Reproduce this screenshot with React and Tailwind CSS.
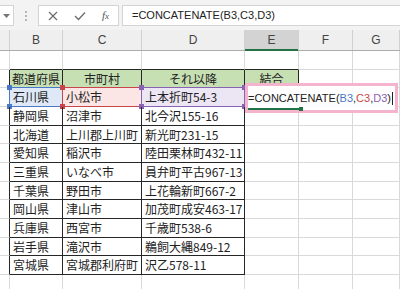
import React from "react";

const colW = ["w-[10px]", "w-[53px]", "w-[79px]", "w-[103px]", "w-[54px]", "w-[54px]", "w-[47px]"];
const rowH = ["h-[19px]", "h-[18px]", "h-[19px]", "h-[19px]", "h-[18px]", "h-[19px]", "h-[19px]", "h-[18px]", "h-[19px]", "h-[19px]", "h-[18px]", "h-[19px]", "h-[19px]"];

const data = [
  ["石川県", "小松市", "上本折町54-3"],
  ["静岡県", "沼津市", "北今沢155-16"],
  ["北海道", "上川郡上川町", "新光町231-15"],
  ["愛知県", "稲沢市", "陸田栗林町432-11"],
  ["三重県", "いなべ市", "員弁町平古967-13"],
  ["千葉県", "野田市", "上花輪新町667-2"],
  ["岡山県", "津山市", "加茂町成安463-17"],
  ["兵庫県", "西宮市", "千歳町538-6"],
  ["岩手県", "滝沢市", "鵜飼大縄849-12"],
  ["宮城県", "宮城郡利府町", "沢乙578-11"],
];

const inTable = (r, c) => (r >= 2 && r <= 12 && c >= 1 && c <= 3) || (r === 2 && c === 4);

function cellText(r, c) {
  if (r === 2) {
    return ["", "都道府県", "市町村", "それ以降", "結合"][c] || "";
  }
  if (r >= 3 && r <= 12 && c >= 1 && c <= 3) return data[r - 3][c - 1];
  return "";
}

function Sel({ border, fill }) {
  return (
    <span className={`absolute -top-px -left-px -right-px -bottom-px border ${border}`}>
      <span className={`absolute -left-[3px] -top-[3px] w-[5px] h-[5px] ${fill}`} />
      <span className={`absolute -right-[3px] -top-[3px] w-[5px] h-[5px] ${fill}`} />
      <span className={`absolute -left-[3px] -bottom-[3px] w-[5px] h-[5px] ${fill}`} />
      <span className={`absolute -right-[3px] -bottom-[3px] w-[5px] h-[5px] ${fill}`} />
    </span>
  );
}

function Cell({ r, c }) {
  const rightDark = inTable(r, c) || inTable(r, c + 1);
  const bottomDark = inTable(r, c) || inTable(r + 1, c);
  const header = r === 2;
  let bg = "";
  if (header && inTable(r, c)) bg = "bg-[#c6e0b4]";
  if (r === 3 && c === 1) bg = "bg-[#dfe8f6]";
  if (r === 3 && c === 2) bg = "bg-[#fbe5e5]";
  if (r === 3 && c === 3) bg = "bg-[#ece6f4]";
  const text = cellText(r, c);
  return (
    <div
      className={`relative shrink-0 flex items-center border-r border-b ${colW[c]} ${
        rightDark ? "border-r-[#262626]" : "border-r-[#d9d9d9]"
      } ${bottomDark ? "border-b-[#262626]" : "border-b-[#d9d9d9]"} ${bg} ${
        header ? "justify-center" : "pl-[3px]"
      }`}
    >
      <span className="whitespace-nowrap leading-none text-[12px] text-[#222] font-['Noto_Sans_CJK_JP',sans-serif]">
        {text}
      </span>
      {r === 3 && c === 1 && <Sel border="border-[#4a78c8]" fill="bg-[#4a78c8]" />}
      {r === 3 && c === 2 && <Sel border="border-[#c8464b]" fill="bg-[#c8464b]" />}
      {r === 3 && c === 3 && <Sel border="border-[#8a62b4]" fill="bg-[#8a62b4]" />}
    </div>
  );
}

export default function App() {
  const letters = ["", "B", "C", "D", "E", "F", "G"];
  return (
    <div className="w-[400px] h-[289px] overflow-hidden bg-white font-['Liberation_Sans',sans-serif]">
      {/* formula bar */}
      <div className="h-[30px] bg-[#f3f3f3] flex items-start pt-[5px]">
        <div className="w-[14px] h-[21px] bg-white border border-[#d4d4d4] border-l-0 flex items-center justify-center">
          <svg width="7" height="4" viewBox="0 0 7 4"><path d="M0 0 L7 0 L3.5 4 Z" fill="#777" /></svg>
        </div>
        <div className="w-[24px] h-[21px] flex flex-col items-center justify-center gap-[2px]">
          <span className="w-[2px] h-[2px] bg-[#b5b5b5]" />
          <span className="w-[2px] h-[2px] bg-[#b5b5b5]" />
          <span className="w-[2px] h-[2px] bg-[#b5b5b5]" />
        </div>
        <div className="w-[81px] h-[21px] bg-white border border-[#d4d4d4] flex items-center">
          <svg className="ml-[9px]" width="10" height="10" viewBox="0 0 10 10">
            <path d="M1 1 L9 9 M9 1 L1 9" stroke="#6b6b6b" strokeWidth="1.2" />
          </svg>
          <svg className="ml-[16px]" width="12" height="10" viewBox="0 0 12 10">
            <path d="M1 5 L4.5 8.5 L11 1.5" stroke="#6b6b6b" strokeWidth="1.3" fill="none" />
          </svg>
          <span className="ml-[16px] text-[11px] italic text-[#555] font-['Liberation_Serif',serif] leading-none">
            f<span className="text-[9px]">x</span>
          </span>
        </div>
        <div className="ml-[3px] flex-1 h-[21px] bg-white border border-[#d4d4d4] border-r-0 flex items-center pl-[9px]">
          <span className="text-[11px] text-[#222] leading-none whitespace-nowrap">=CONCATENATE(B3,C3,D3)</span>
        </div>
      </div>

      {/* sheet */}
      <div className="relative">
        {/* column headers */}
        <div className="flex h-[21px] bg-[#efefef] border-b border-[#ababab]">
          {letters.map((l, i) => (
            <div
              key={i}
              className={`relative shrink-0 flex items-center justify-center border-r border-[#d0d0d0] ${colW[i]} ${
                i === 4 ? "bg-[#d3d3d3]" : ""
              }`}
            >
              <span className="text-[12px] text-[#444] leading-none">{l}</span>
              {i === 4 && <span className="absolute left-0 right-0 -bottom-px h-[2px] bg-[#217346]" />}
            </div>
          ))}
        </div>
        {rowH.map((h, ri) => {
          const r = ri + 1;
          return (
            <div key={r} className={`flex ${h}`}>
              {colW.map((_, c) => (
                <Cell key={c} r={r} c={c} />
              ))}
            </div>
          );
        })}

        {/* in-cell edit box */}
        <div className="absolute left-[245px] top-[53px] w-[153px] h-[30px] border-[3px] border-[#f4b4cd] bg-white flex items-center">
          <span className="text-[11px] text-[#222] leading-none whitespace-nowrap">
            =CONCATENATE(<span className="text-[#4a78c8]">B3</span>,<span className="text-[#c8464b]">C3</span>,
            <span className="text-[#8a62b4]">D3</span>)
          </span>
          <span className="w-px h-[13px] bg-[#222] ml-[1px]" />
          <span className="absolute left-0 top-[22px] w-[53px] h-[2px] bg-[#217346]" />
          <span className="absolute left-[51px] top-[21px] w-[4px] h-[4px] bg-[#217346]" />
        </div>
      </div>
    </div>
  );
}
